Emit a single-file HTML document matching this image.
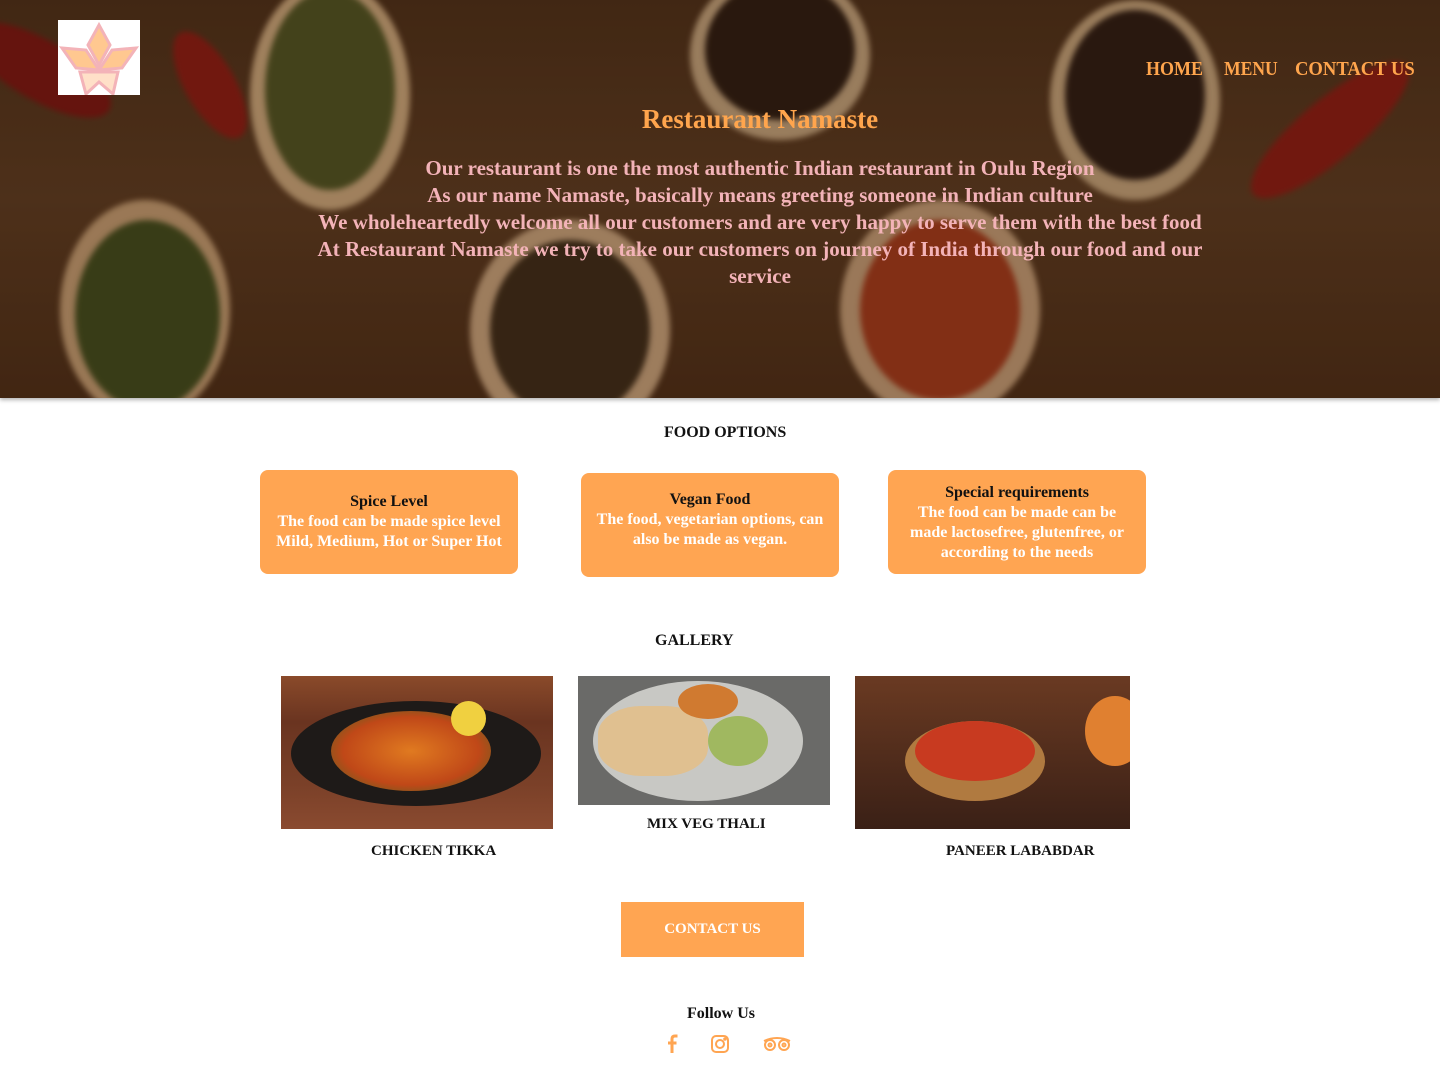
<!DOCTYPE html>
<html><head><meta charset="utf-8"><style>
*{margin:0;padding:0;box-sizing:border-box}
body{width:1440px;height:1074px;background:#fff;font-family:"Liberation Serif",serif;font-weight:bold;position:relative;overflow:hidden}
.hero{position:absolute;left:0;top:0;width:1440px;height:398px;overflow:hidden;
background:linear-gradient(180deg,#4a2e18 0%,#5a3a20 50%,#4a2c16 100%);box-shadow:0 2px 4px rgba(0,0,0,.3)}
.b{position:absolute;border-radius:50%;filter:blur(3px)}
.logo{position:absolute;left:58px;top:20px;width:82px;height:75px;background:#fff}
.nv{position:absolute;top:58px;font-size:20px;color:#ffa54d;transform-origin:left top;white-space:nowrap}
h1{position:absolute;left:0;width:1520px;top:104px;text-align:center;font-size:27px;color:#ffa54d}
.p{position:absolute;left:300px;width:920px;top:155px;text-align:center;font-size:21px;line-height:27px;color:#f3b3b8}
.h2{position:absolute;font-size:16px;color:#111}
.card{position:absolute;width:258px;background:#ffa552;border-radius:8px;text-align:center;font-size:16px;line-height:20px;color:#111}
.card i{font-style:normal;color:#fff}
.img{position:absolute;overflow:hidden}
.cap{position:absolute;font-size:15px;color:#111}
.btn{position:absolute;left:621px;top:902px;width:183px;height:55px;background:#ffa552;color:#fff;font-size:15px;text-align:center;line-height:55px}
</style></head><body>
<div class="hero">
 <div class="b" style="left:-40px;top:40px;width:160px;height:60px;background:#7a1410;transform:rotate(30deg)"></div>
 <div class="b" style="left:150px;top:60px;width:120px;height:50px;background:#8a1a12;transform:rotate(60deg)"></div>
 <div class="b" style="left:250px;top:-20px;width:160px;height:230px;background:#c8a57a"></div>
 <div class="b" style="left:265px;top:-10px;width:130px;height:200px;background:#4d5222"></div>
 <div class="b" style="left:60px;top:200px;width:170px;height:220px;background:#c09a70"></div>
 <div class="b" style="left:75px;top:220px;width:145px;height:190px;background:#3e4a1c"></div>
 <div class="b" style="left:690px;top:-30px;width:180px;height:170px;background:#bfa07a"></div>
 <div class="b" style="left:705px;top:-20px;width:150px;height:140px;background:#2a1a10"></div>
 <div class="b" style="left:470px;top:220px;width:200px;height:220px;background:#c4a07a"></div>
 <div class="b" style="left:490px;top:240px;width:160px;height:180px;background:#3b2a18"></div>
 <div class="b" style="left:840px;top:200px;width:200px;height:220px;background:#c09a74"></div>
 <div class="b" style="left:860px;top:220px;width:160px;height:180px;background:#a0381a"></div>
 <div class="b" style="left:1050px;top:0;width:170px;height:200px;background:#c0a078"></div>
 <div class="b" style="left:1065px;top:10px;width:140px;height:170px;background:#2a1a12"></div>
 <div class="b" style="left:1230px;top:100px;width:200px;height:60px;background:#8a1a12;transform:rotate(-40deg)"></div>
 <div style="position:absolute;inset:0;background:rgba(40,20,8,.25)"></div>
</div>
<div class="logo"><svg width="82" height="75" viewBox="0 0 82 75">
<g fill="#ffc890" stroke="#f3b3b8" stroke-width="3">
<path d="M41 5 L52 25 L41 45 L30 25Z"/>
<path d="M4 28 L28 30 L41 50 L18 48Z"/><path d="M78 28 L54 30 L41 50 L64 48Z"/>
<path d="M22 52 L60 52 L55 74 L41 62 L28 74Z" fill="#ffe0c8"/></g></svg></div>
<div class="nv" style="left:1146px;transform:scaleX(.9)">HOME</div>
<div class="nv" style="left:1224px;transform:scaleX(.88)">MENU</div>
<div class="nv" style="left:1295px;transform:scaleX(.93)">CONTACT US</div>
<h1>Restaurant Namaste</h1>
<div class="p">Our restaurant is one the most authentic Indian restaurant in Oulu Region<br>As our name Namaste, basically means greeting someone in Indian culture<br>We wholeheartedly welcome all our customers and are very happy to serve them with the best food<br>At Restaurant Namaste we try to take our customers on journey of India through our food and our service</div>
<div class="h2" style="left:664px;top:424px">FOOD OPTIONS</div>
<div class="card" style="left:260px;top:470px;height:104px;padding-top:22px">Spice Level<br><i>The food can be made spice level<br>Mild, Medium, Hot or Super Hot</i></div>
<div class="card" style="left:581px;top:473px;height:104px;padding-top:17px">Vegan Food<br><i>The food, vegetarian options, can<br>also be made as vegan.</i></div>
<div class="card" style="left:888px;top:470px;height:104px;padding-top:13px">Special requirements<br><i>The food can be made can be<br>made lactosefree, glutenfree, or<br>according to the needs</i></div>
<div class="h2" style="left:655px;top:632px">GALLERY</div>
<div class="img" style="left:281px;top:676px;width:272px;height:153px;background:linear-gradient(#8a4a2a,#6a3420 30%,#7a4028 70%,#8a4a30)">
 <div style="position:absolute;left:10px;top:25px;width:250px;height:105px;border-radius:50%;background:#1e1a18"></div>
 <div style="position:absolute;left:50px;top:35px;width:160px;height:80px;border-radius:50%;background:radial-gradient(#e07a20,#c04818 60%,#3a6a20)"></div>
 <div style="position:absolute;left:170px;top:25px;width:35px;height:35px;border-radius:50%;background:#f0d040"></div></div>
<div class="img" style="left:578px;top:676px;width:252px;height:129px;background:#6a6a68">
 <div style="position:absolute;left:15px;top:5px;width:210px;height:120px;border-radius:50%;background:#c8c8c4"></div>
 <div style="position:absolute;left:20px;top:30px;width:110px;height:70px;border-radius:40%;background:#e0c090"></div>
 <div style="position:absolute;left:130px;top:40px;width:60px;height:50px;border-radius:50%;background:#a0b860"></div>
 <div style="position:absolute;left:100px;top:8px;width:60px;height:35px;border-radius:50%;background:#d07a30"></div></div>
<div class="img" style="left:855px;top:676px;width:275px;height:153px;background:linear-gradient(#6a3a22,#3a2016)">
 <div style="position:absolute;left:50px;top:45px;width:140px;height:80px;border-radius:50%;background:#b07a40"></div>
 <div style="position:absolute;left:60px;top:45px;width:120px;height:60px;border-radius:50%;background:#c83a20"></div>
 <div style="position:absolute;left:230px;top:20px;width:60px;height:70px;border-radius:50%;background:#e08030"></div></div>
<div class="cap" style="left:371px;top:843px">CHICKEN TIKKA</div>
<div class="cap" style="left:647px;top:816px">MIX VEG THALI</div>
<div class="cap" style="left:946px;top:843px">PANEER LABABDAR</div>
<div class="btn">CONTACT US</div>
<div class="h2" style="left:687px;top:1005px">Follow Us</div>
<svg style="position:absolute;left:660px;top:1032px" width="140" height="24" viewBox="0 0 140 24" fill="none" stroke="#ffa552" stroke-width="2">
<path d="M12 21V7q0-3 3-3h2.5M8 11h8.5" stroke-width="3"/>
<rect x="52" y="4" width="16" height="16" rx="4"/><circle cx="60" cy="12" r="4"/><circle cx="65" cy="7" r=".8" fill="#ffa552"/>
<path d="M104 9q13-6 26 0"/><circle cx="110" cy="13" r="5"/><circle cx="124" cy="13" r="5"/><circle cx="110" cy="13" r="1.5"/><circle cx="124" cy="13" r="1.5"/></svg>
</body></html>
